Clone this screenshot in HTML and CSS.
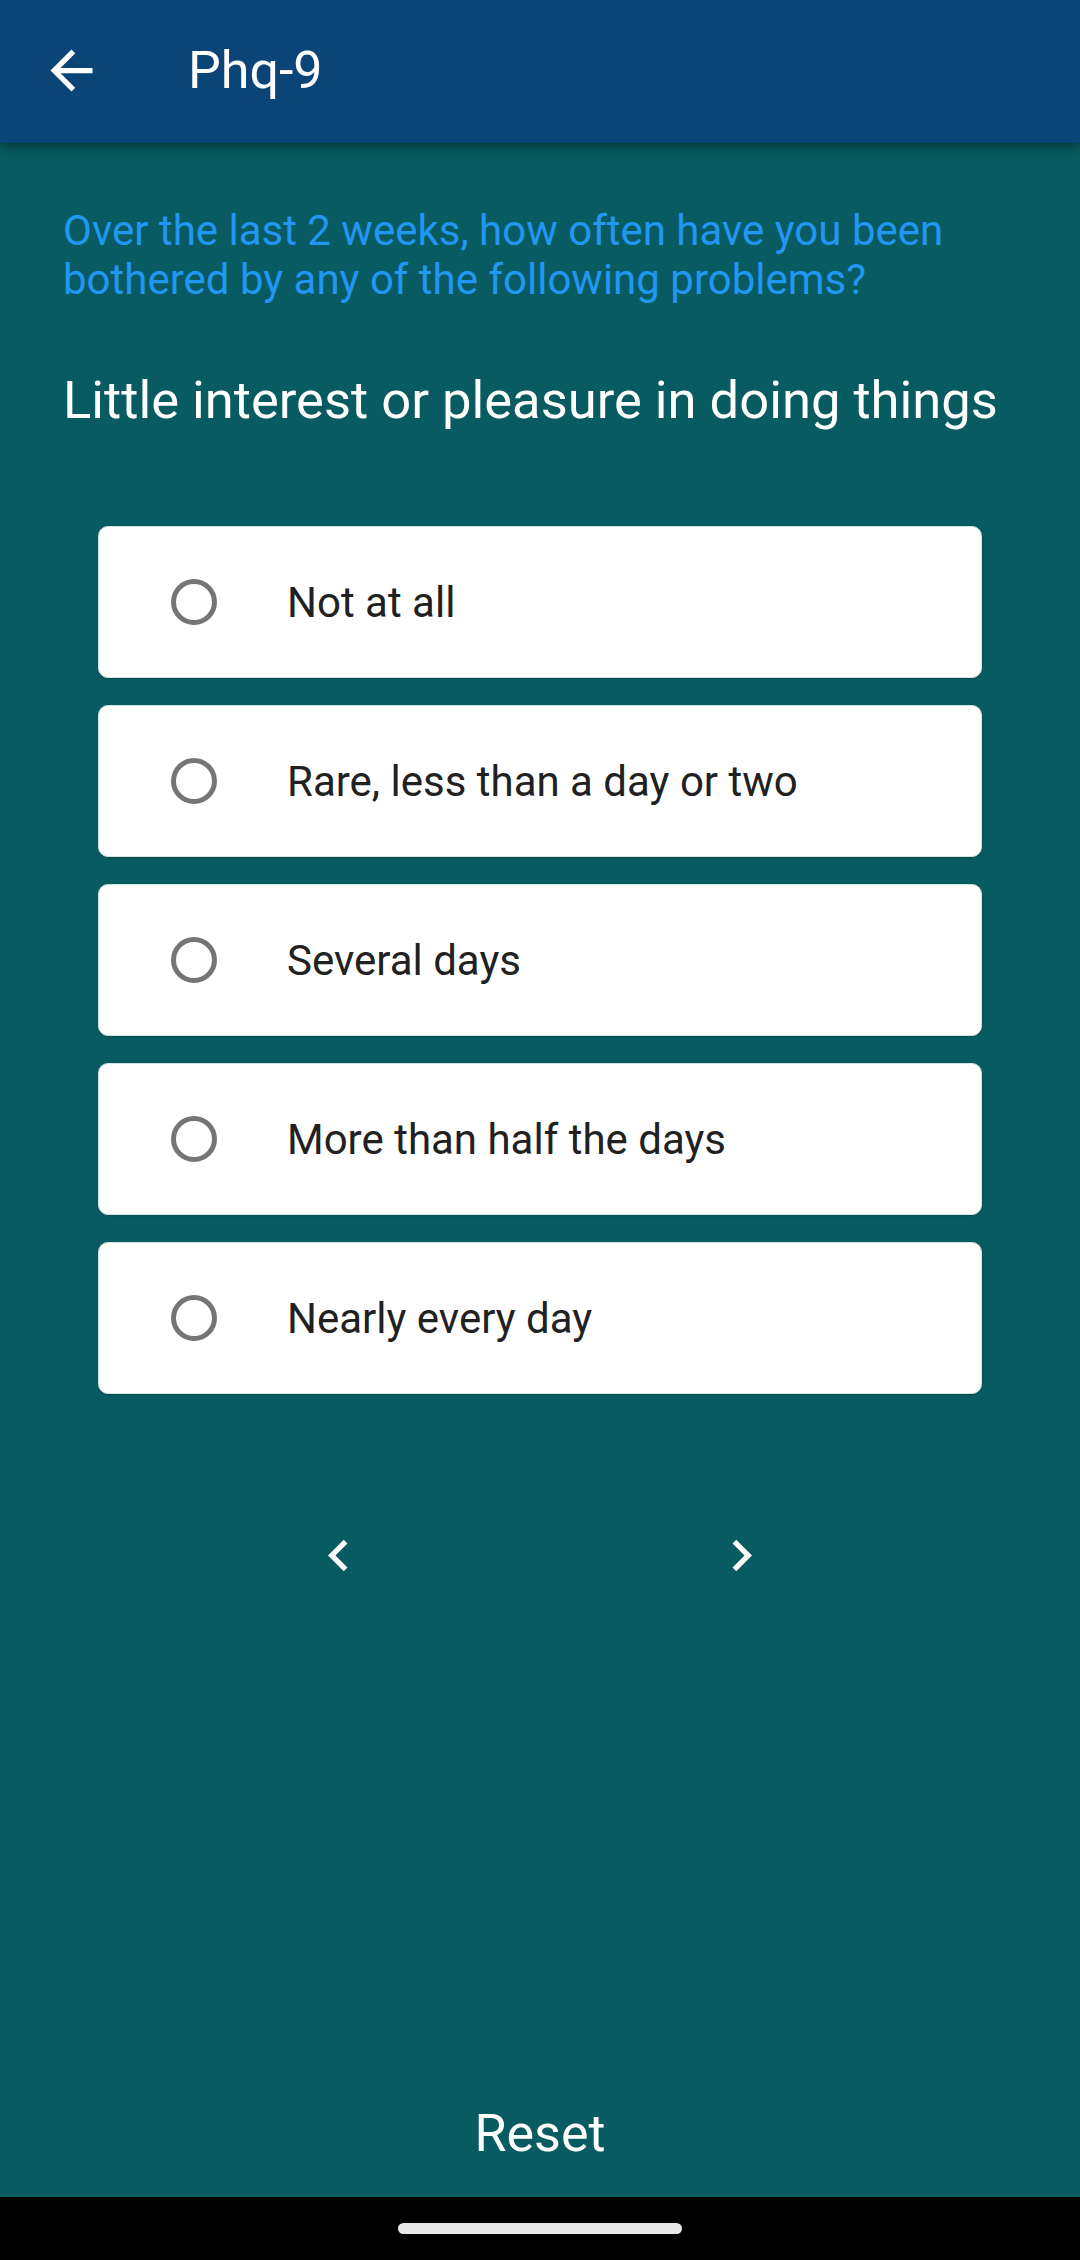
FILE: index.html
```html
<!DOCTYPE html>
<html lang="en">
<head>
<meta charset="utf-8">
<title>Phq-9</title>
<link rel="stylesheet" href="styles.css">
</head>
<body>
<div class="screen">
  <header class="appbar">
    <button class="icon-btn back" aria-label="Back">
      <svg viewBox="0 0 24 24" width="63" height="63"><path fill="#fff" d="M20 11H7.83l5.59-5.59L12 4l-8 8 8 8 1.41-1.41L7.83 13H20v-2z"/></svg>
    </button>
    <h1 class="title">Phq-9</h1>
  </header>
  <main class="content">
    <p class="intro">Over the last 2 weeks, how often have you been bothered by any of the following problems?</p>
    <h2 class="question">Little interest or pleasure in doing things</h2>
    <div class="options">
      <div class="option"><svg class="radio" viewBox="0 0 48 48" width="48" height="48"><circle cx="24" cy="24" r="20.5" fill="none" stroke="#757575" stroke-width="5"/></svg><span class="label">Not at all</span></div>
      <div class="option"><svg class="radio" viewBox="0 0 48 48" width="48" height="48"><circle cx="24" cy="24" r="20.5" fill="none" stroke="#757575" stroke-width="5"/></svg><span class="label">Rare, less than a day or two</span></div>
      <div class="option"><svg class="radio" viewBox="0 0 48 48" width="48" height="48"><circle cx="24" cy="24" r="20.5" fill="none" stroke="#757575" stroke-width="5"/></svg><span class="label">Several days</span></div>
      <div class="option"><svg class="radio" viewBox="0 0 48 48" width="48" height="48"><circle cx="24" cy="24" r="20.5" fill="none" stroke="#757575" stroke-width="5"/></svg><span class="label">More than half the days</span></div>
      <div class="option"><svg class="radio" viewBox="0 0 48 48" width="48" height="48"><circle cx="24" cy="24" r="20.5" fill="none" stroke="#757575" stroke-width="5"/></svg><span class="label">Nearly every day</span></div>
    </div>
    <div class="nav">
      <button class="icon-btn nav-btn" aria-label="Previous">
        <svg viewBox="0 0 24 24" width="63" height="63"><path fill="#fff" d="M15.41 7.41L14 6l-6 6 6 6 1.41-1.41L10.83 12z"/></svg>
      </button>
      <button class="icon-btn nav-btn" aria-label="Next">
        <svg viewBox="0 0 24 24" width="63" height="63"><path fill="#fff" d="M10 6L8.59 7.41 13.17 12l-4.58 4.59L10 18l6-6z"/></svg>
      </button>
    </div>
    <div class="spacer"></div>
    <button class="reset">Reset</button>
  </main>
  <footer class="sysnav"><div class="handle"></div></footer>
</div>
</body>
</html>
```

FILE: styles.css
```css
* { box-sizing: border-box; }
html, body { margin: 0; padding: 0; }
body {
  width: 1080px;
  height: 2260px;
  background: #085b60;
  font-family: Roboto, "Noto Sans", "Liberation Sans", sans-serif;
  overflow: hidden;
}
.screen {
  height: 2260px;
  display: flex;
  flex-direction: column;
}
.appbar {
  position: relative;
  z-index: 2;
  height: 143px;
  flex: 0 0 143px;
  background: #0b4577;
  display: flex;
  align-items: center;
  padding-left: 40px;
  box-shadow: 0 3px 10px rgba(0, 0, 0, 0.45);
}
.icon-btn {
  border: 0;
  background: transparent;
  padding: 0;
  margin: 0;
  display: flex;
  align-items: center;
  justify-content: center;
  cursor: pointer;
}
.back { width: 63px; height: 63px; margin-top: -2px; }
.back svg, .nav-btn svg { display: block; }
.title {
  margin: -2px 0 0 85px;
  color: #fff;
  font-weight: 400;
  font-size: 52px;
  line-height: 60px;
}
.content {
  flex: 1;
  display: flex;
  flex-direction: column;
  padding: 63px 63px 0;
}
.intro {
  margin: 0;
  color: #2196f3;
  font-size: 42px;
  line-height: 49px;
}
.question {
  margin: 66px 0 0;
  color: #fff;
  font-weight: 400;
  font-size: 52.5px;
  line-height: 61px;
}
.options {
  margin-top: 95px;
  padding: 0 35px;
  display: flex;
  flex-direction: column;
  gap: 27px;
}
.option {
  height: 152px;
  background: #fff;
  border-radius: 10px;
  border: 1px solid #d3e2e2;
  display: flex;
  align-items: center;
  padding-left: 71px;
  box-shadow: 0 1px 2px rgba(0, 0, 0, 0.15);
}
.radio { flex: 0 0 48px; display: block; }
.label {
  margin-left: 69px;
  font-size: 42px;
  color: #212121;
}
.nav {
  margin-top: 98px;
  display: flex;
  justify-content: center;
  gap: 277px;
}
.nav-btn { width: 126px; height: 126px; }
.spacer { flex: 1; }
.reset {
  align-self: center;
  border: 0;
  background: transparent;
  color: #fff;
  font-family: inherit;
  font-size: 52px;
  padding: 0;
  height: 126px;
  margin-bottom: 0;
  line-height: 126px;
}
.sysnav {
  height: 63px;
  flex: 0 0 63px;
  background: #000;
  display: flex;
  justify-content: center;
  padding-top: 26px;
}
.handle {
  width: 284px;
  height: 11px;
  border-radius: 6px;
  background: #e8e8e8;
}
```
